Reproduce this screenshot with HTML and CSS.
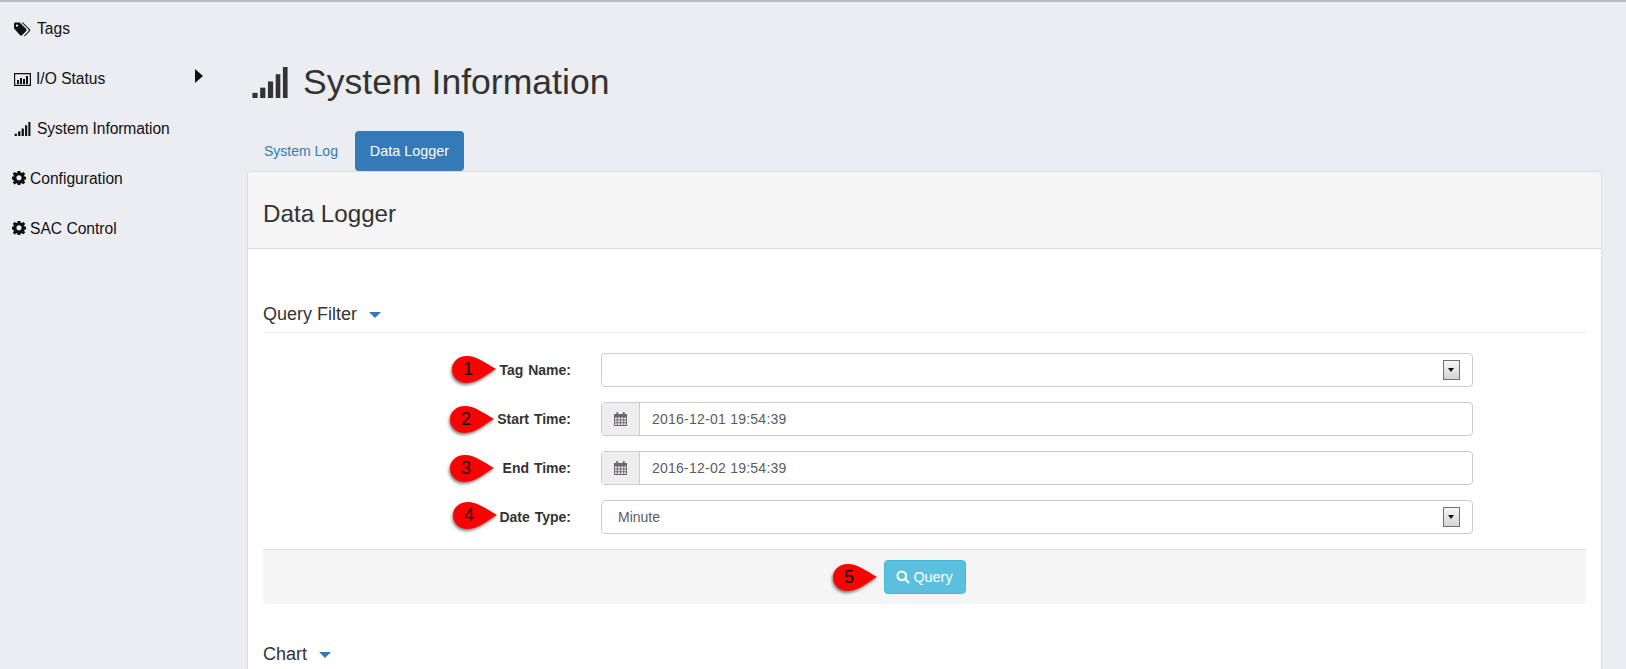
FILE: index.html
```html
<!DOCTYPE html>
<html lang="en">
<head>
	<meta charset="UTF-8">
	<title>System Information</title>
	<link rel="stylesheet" href="styles.css">
</head>
<body>
	<svg class="defs" width="0" height="0">
		<defs>
			<symbol id="signal" viewBox="0 0 34 30">
				<rect x="0" y="25" width="5" height="5"/>
				<rect x="7.500" y="20" width="5" height="10"/>
				<rect x="15" y="14" width="5" height="16"/>
				<rect x="22.500" y="7" width="4.500" height="23"/>
				<rect x="29.500" y="0" width="4.500" height="30"/>
			</symbol>
			<symbol id="gear" viewBox="0 0 16 16">
				<path fill-rule="evenodd" d="M6.500 0h3l.4 2.200 1.200.5L13 1.400l2.100 2.100-1.300 1.900.5 1.200 2.200.4v3l-2.200.4-.5 1.200 1.300 1.900-2.100 2.100-1.900-1.300-1.200.5-.4 2.200h-3l-.4-2.200-1.200-.5L3 15.900.9 13.800l1.300-1.900-.5-1.200L0 10.100V7l1.700-.4.5-1.200L.9 3.500 3 1.400l1.900 1.300 1.200-.5zM8 5.300a2.900 2.900 0 1 0 0 5.800 2.900 2.900 0 0 0 0-5.800z" transform="translate(0 -.4)"/>
			</symbol>
			<symbol id="calendar" viewBox="0 0 14 15">
				<path fill-rule="evenodd" d="M0 2h2.500V.5a.5.5 0 0 1 .5-.5h1a.5.5 0 0 1 .5.500V2h5V.5A.5.5 0 0 1 10 0h1a.5.5 0 0 1 .5.500V2H14v13H0zM1 6v2h2V6zm3 0v2h2.500V6zm3.500 0v2H10V6zM11 6v2h2V6zM1 9v2h2V9zm3 0v2h2.500V9zm3.500 0v2H10V9zM11 9v2h2V9zM1 12v2h2v-2zm3 0v2h2.500v-2zm3.500 0v2H10v-2zm3.500 0v2h2v-2z"/>
			</symbol>
			<symbol id="marker" viewBox="0 0 48 32">
				<path d="M16 2C26 2 36 10 45 15C36 20 26 29 16 29C7 29 1 23 1 15.500C1 8 7 2 16 2z"/>
			</symbol>
		</defs>
	</svg>

	<div class="page">
		<ul class="side-nav">
			<li>
				<svg class="nav-icon tag-icon" viewBox="0 0 18 15">
					<path fill-rule="evenodd" d="M0 1.500A1.500 1.500 0 0 1 1.500 0H6l7 7a1.500 1.500 0 0 1 0 2l-4.500 4.500a1.500 1.500 0 0 1-2 0L0 6.500zM3.200 2.200a1.200 1.200 0 1 0 0 2.400 1.200 1.200 0 0 0 0-2.400z"/>
					<path d="M8 0h1.500l7.300 7.300a1.500 1.500 0 0 1 0 2L12 14.200a1.500 1.500 0 0 1-1.700.3l5-5.200a1.500 1.500 0 0 0 0-2z"/>
				</svg>
				<span class="nav-text">Tags</span>
			</li>
			<li>
				<svg class="nav-icon" viewBox="0 0 17 14">
					<path fill-rule="evenodd" d="M0 1h17v13H0zm1.200 1.200v10.600h14.600V2.200z"/>
					<rect x="3" y="8" width="2" height="4"/>
					<rect x="6" y="6" width="2" height="6"/>
					<rect x="9" y="7" width="2" height="5"/>
					<rect x="12" y="4" width="2" height="8"/>
				</svg>
				<span class="nav-text">I/O Status</span>
				<span class="nav-arrow"></span>
			</li>
			<li>
				<svg class="nav-icon"><use href="#signal"/></svg>
				<span class="nav-text nav-text-wide">System Information</span>
			</li>
			<li class="nav-gear">
				<svg class="gear-icon"><use href="#gear"/></svg>
				<span>Configuration</span>
			</li>
			<li class="nav-gear">
				<svg class="gear-icon"><use href="#gear"/></svg>
				<span>SAC Control</span>
			</li>
		</ul>

		<div class="main">
			<h1 class="page-title">
				<svg class="title-icon"><use href="#signal"/></svg>
				System Information
			</h1>

			<ul class="tabs">
				<li class="tab">System Log</li>
				<li class="tab active">Data Logger</li>
			</ul>

			<div class="panel">
				<div class="panel-heading">Data Logger</div>
				<div class="panel-body">
					<div class="section-title">Query Filter <span class="caret"></span></div>

					<div class="form">
						<div class="form-row">
							<label class="form-label">Tag Name:</label>
							<div class="select"><span class="select-btn"></span></div>
							<span class="marker m1"><svg><use href="#marker"/></svg><b>1</b></span>
						</div>
						<div class="form-row">
							<label class="form-label">Start Time:</label>
							<div class="date-input">
								<span class="addon"><svg><use href="#calendar"/></svg></span>
								<span class="date-value">2016-12-01 19:54:39</span>
							</div>
							<span class="marker m2"><svg><use href="#marker"/></svg><b>2</b></span>
						</div>
						<div class="form-row">
							<label class="form-label">End Time:</label>
							<div class="date-input">
								<span class="addon"><svg><use href="#calendar"/></svg></span>
								<span class="date-value">2016-12-02 19:54:39</span>
							</div>
							<span class="marker m2"><svg><use href="#marker"/></svg><b>3</b></span>
						</div>
						<div class="form-row">
							<label class="form-label">Date Type:</label>
							<div class="select">Minute<span class="select-btn"></span></div>
							<span class="marker m4"><svg><use href="#marker"/></svg><b>4</b></span>
						</div>
					</div>

					<div class="form-footer">
						<button class="btn-query">
							<svg viewBox="0 0 14 14"><circle cx="5.800" cy="5.800" r="4.300"/><path d="M9 9l4 4"/></svg>
							Query
						</button>
						<span class="marker m5"><svg><use href="#marker"/></svg><b>5</b></span>
					</div>

					<div class="section-title chart-title">Chart <span class="caret"></span></div>
				</div>
			</div>
		</div>
	</div>
</body>
</html>
```

FILE: styles.css
```css
*{
	margin: 0;
	padding: 0;
	box-sizing: border-box;
}
html,body{
	height: 669px;
	overflow: hidden;
}
body{
	background-color: #ebedf1;
	border-top: 2px solid #b9babd;
	font-family: "Liberation Sans", Arial, sans-serif;
	font-size: 14px;
	color: #333;
}
ul{
	list-style: none;
}
.defs{
	position: absolute;
}
.page{
	display: flex;
}

/* left menu */
.side-nav{
	width: 247px;
	flex-shrink: 0;
	padding-top: 2px;
}
.side-nav li{
	height: 50px;
	display: flex;
	align-items: center;
	position: relative;
	padding-left: 14px;
	font-size: 15.600px;
	color: #111;
}
.nav-icon{
	width: 17px;
	height: 14px;
	fill: #111;
	margin-right: 5px;
	flex-shrink: 0;
}
.tag-icon{
	height: 15px;
	margin-right: 6px;
}
.nav-text-wide{
	margin-left: 1px;
	letter-spacing: -.1px;
}
.nav-gear{
	padding-left: 12px !important;
}
.gear-icon{
	width: 14px;
	height: 14px;
	fill: #111;
	margin: -2px 4px 0 0;
}
.nav-arrow{
	position: absolute;
	left: 195px;
	top: 15px;
	border-left: 8px solid #111;
	border-top: 7px solid transparent;
	border-bottom: 7px solid transparent;
}

/* main column */
.main{
	flex: 1;
	padding-right: 24px;
	min-width: 0;
}
.page-title{
	font-size: 35.600px;
	font-weight: normal;
	line-height: 40px;
	color: #333;
	display: flex;
	padding: 60px 0 0 3px;
	height: 129px;
	align-items: flex-start;
}
.title-icon{
	width: 36px;
	height: 31px;
	fill: #333;
	margin: 5px 15px 0 2px;
}
.tabs{
	display: flex;
	padding-left: 1px;
	height: 40px;
}
.tab{
	padding: 0 16px;
	line-height: 40px;
	color: #337ab7;
	border-radius: 4px;
	margin-right: 1px;
	white-space: nowrap;
}
.tab.active{
	background-color: #337ab7;
	color: #fff;
	padding: 0;
	width: 109px;
	text-align: center;
	font-size: 14.400px;
}

.panel{
	background-color: #fff;
	border: 1px solid #ddd;
	border-radius: 4px;
	height: 700px;
}
.panel-heading{
	background-color: #f5f5f5;
	border-bottom: 1px solid #ddd;
	height: 77px;
	line-height: 84px;
	padding-left: 15px;
	font-size: 24.200px;
	border-radius: 3px 3px 0 0;
}
.panel-body{
	padding: 0 15px;
}
.section-title{
	font-size: 18px;
	height: 84px;
	padding-top: 53px;
	line-height: 24px;
	border-bottom: 1px solid #eee;
}
.chart-title{
	border-bottom: 0;
	padding-top: 38px;
}
.caret{
	display: inline-block;
	border-top: 6px solid #337ab7;
	border-left: 6px solid transparent;
	border-right: 6px solid transparent;
	vertical-align: 2px;
	margin-left: 7px;
}

/* form */
.form{
	padding-top: 20px;
}
.form-row{
	display: grid;
	grid-template-columns: 308px 872px;
	column-gap: 30px;
	align-items: center;
	height: 34px;
	margin-bottom: 15px;
	position: relative;
}
.form-label{
	text-align: right;
	font-weight: bold;
	font-size: 14px;
	word-spacing: 1px;
}
.select,.date-input{
	height: 34px;
	border: 1px solid #ccc;
	border-radius: 4px;
	background-color: #fff;
	display: flex;
	align-items: center;
	color: #5c5c5c;
}
.select{
	padding-left: 16px;
	justify-content: space-between;
}
.select-btn{
	width: 17px;
	height: 20px;
	margin-left: auto;
	margin-right: 12px;
	border: 1px solid #707070;
	background: linear-gradient(#f6f6f6, #d4d4d4);
	position: relative;
}
.select-btn::after{
	content: "";
	position: absolute;
	left: 4px;
	top: 7px;
	border-top: 4px solid #111;
	border-left: 3.500px solid transparent;
	border-right: 3.500px solid transparent;
}
.addon{
	width: 38px;
	height: 100%;
	background-color: #eee;
	border-right: 1px solid #ccc;
	border-radius: 3px 0 0 3px;
	display: flex;
	align-items: center;
	justify-content: center;
	flex-shrink: 0;
}
.addon svg{
	width: 13px;
	height: 14px;
	fill: #6b6670;
}
.date-value{
	padding-left: 12px;
	letter-spacing: .24px;
}
.form-footer{
	height: 55px;
	background-color: #f5f5f5;
	border-top: 1px solid #ddd;
	border-radius: 0 0 4px 4px;
	display: flex;
	align-items: center;
	justify-content: center;
	position: relative;
}
.btn-query{
	font-family: inherit;
	font-size: 14.400px;
	color: #fff;
	width: 82px;
	height: 34px;
	background-color: #5bc0de;
	border: 1px solid #46b8da;
	border-radius: 4px;
	display: flex;
	align-items: center;
	justify-content: center;
	gap: 3px;
}
.btn-query svg{
	width: 14px;
	height: 14px;
	fill: none;
	stroke: #fff;
	stroke-width: 2.200;
}

/* red numbered callouts */
.marker{
	position: absolute;
	width: 48px;
	height: 32px;
	display: block;
}
.marker svg{
	width: 48px;
	height: 32px;
	fill: #f00;
	filter: drop-shadow(-1px 2px 1.500px rgba(0,0,0,.5));
	overflow: visible;
}
.marker b{
	position: absolute;
	left: 1px;
	top: 5px;
	width: 32px;
	text-align: center;
	font-size: 18px;
	font-weight: normal;
	color: #111;
}
.m1{
	left: 188px;
	top: 1px;
}
.m2{
	left: 186px;
	top: 2px;
}
.m4{
	left: 189px;
	top: 0;
}
.m5{
	left: 569px;
	top: 12px;
}
```
